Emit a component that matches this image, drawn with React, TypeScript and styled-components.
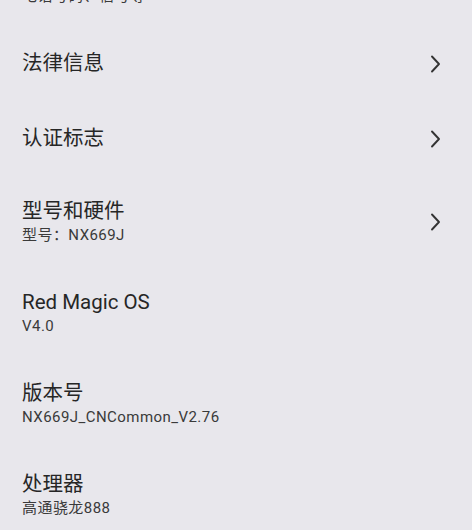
import styled, { createGlobalStyle } from "styled-components";

const GlobalStyle = createGlobalStyle`
  html, body {
    margin: 0;
    padding: 0;
    background: #e8e7ec;
  }
  body {
    font-family: Roboto, "Noto Sans CJK SC", sans-serif;
    overflow: hidden;
  }
`;

const Page = styled.div`
  width: 472px;
  height: 530px;
  overflow: hidden;
  background: #e8e7ec;
`;

const List = styled.div`
  display: flex;
  flex-direction: column;
  margin-top: -61px;
`;

const Row = styled.div<{ $tall?: boolean }>`
  display: flex;
  align-items: center;
  justify-content: space-between;
  height: ${(p) => (p.$tall ? "91px" : "75px")};
  padding: 0 30px 0 22px;
  box-sizing: border-box;

  &:first-child {
    height: 87px;
  }
`;

const Texts = styled.div`
  display: flex;
  flex-direction: column;
  gap: 2px;
`;

const Title = styled.div`
  font-size: 20.5px;
  line-height: 25px;
  color: #262626;
`;

const Sub = styled.div`
  font-size: 15px;
  line-height: 18px;
  letter-spacing: 0.45px;
  color: #3a3a3a;
`;

const Chevron = () => (
  <svg width="13" height="18" viewBox="0 0 13 18">
    <path
      d="M3 1.5 L10 9 L3 16.5"
      fill="none"
      stroke="#333"
      strokeWidth="1.9"
      strokeLinecap="round"
      strokeLinejoin="round"
    />
  </svg>
);

type Item = { title: string; sub?: string; arrow?: boolean };

const items: Item[] = [
  { title: "状态信息", sub: "电话号码、信号等" },
  { title: "法律信息", arrow: true },
  { title: "认证标志", arrow: true },
  { title: "型号和硬件", sub: "型号：NX669J", arrow: true },
  { title: "Red Magic OS", sub: "V4.0" },
  { title: "版本号", sub: "NX669J_CNCommon_V2.76" },
  { title: "处理器", sub: "高通骁龙888" },
];

export default function App() {
  return (
    <Page>
      <GlobalStyle />
      <List>
        {items.map((it) => (
          <Row key={it.title} $tall={!!it.sub}>
            <Texts>
              <Title>{it.title}</Title>
              {it.sub && <Sub>{it.sub}</Sub>}
            </Texts>
            {it.arrow && <Chevron />}
          </Row>
        ))}
      </List>
    </Page>
  );
}
